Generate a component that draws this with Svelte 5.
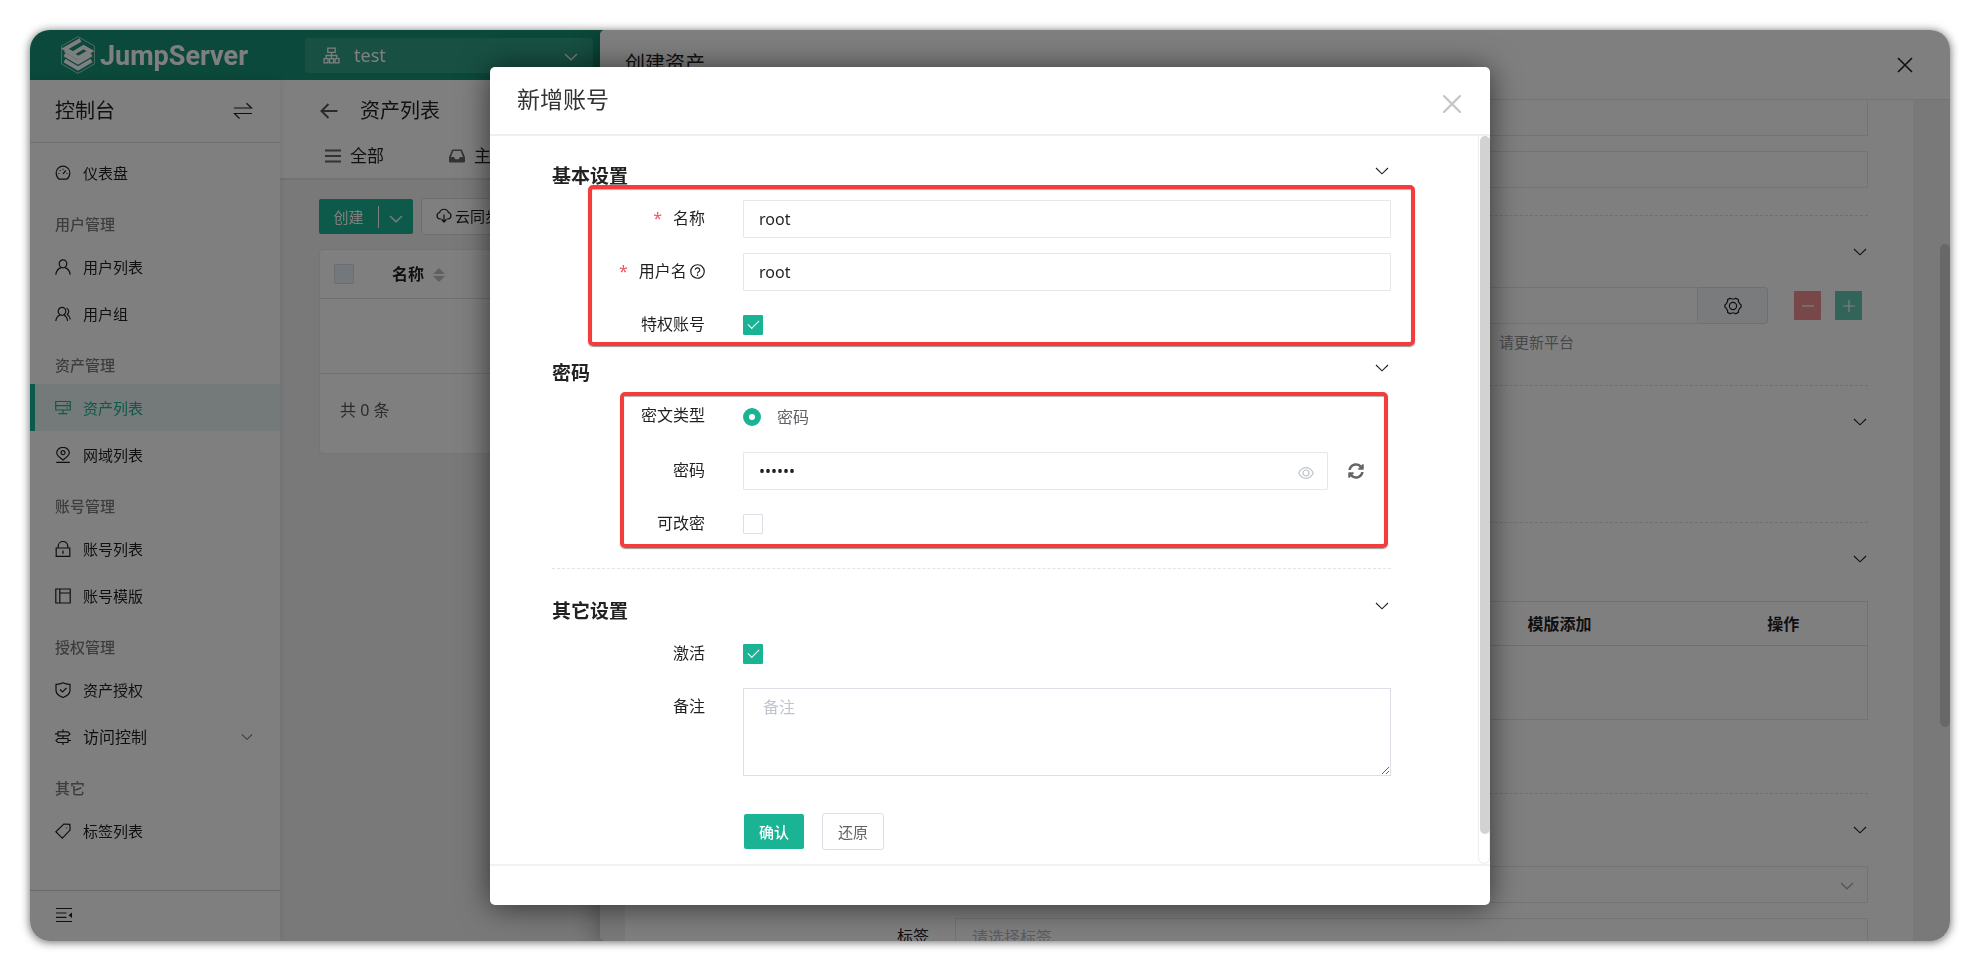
<script lang="ts">
	type MenuItem = {
		label: string;
		icon: string;
		active?: boolean;
		expandable?: boolean;
	};

	type MenuGroup = {
		title: string;
		items: MenuItem[];
	};

	// 侧边栏菜单
	const menu: MenuGroup[] = [
		{ title: '', items: [{ label: '仪表盘', icon: 'dashboard' }] },
		{
			title: '用户管理',
			items: [
				{ label: '用户列表', icon: 'user' },
				{ label: '用户组', icon: 'group' }
			]
		},
		{
			title: '资产管理',
			items: [
				{ label: '资产列表', icon: 'asset', active: true },
				{ label: '网域列表', icon: 'domain' }
			]
		},
		{
			title: '账号管理',
			items: [
				{ label: '账号列表', icon: 'lock' },
				{ label: '账号模版', icon: 'template' }
			]
		},
		{
			title: '授权管理',
			items: [
				{ label: '资产授权', icon: 'shield' },
				{ label: '访问控制', icon: 'acl', expandable: true }
			]
		},
		{ title: '其它', items: [{ label: '标签列表', icon: 'tag' }] }
	];

	// 16x16 线条图标
	const icons: Record<string, string> = {
		dashboard:
			'M4.2 14.2C2.5 13 1.2 10.8 1.2 8a6.8 6.8 0 0 1 13.6 0c0 2.800-1.300 5-3 6.200zM8 8.800l2.800-3.300M3.500 8.500h1M11.500 8.500h1M8 3.800v1M4.800 5.200l.7.7',
		user: 'M8 .8a3.800 4 0 1 1 0 8a3.800 4 0 1 1 0-8M.8 15.700c.4-3.600 2.600-6.200 5.200-7.100M15.200 15.700c-.4-3.600-2.600-6.200-5.200-7.100',
		group:
			'M7 1.300a3.800 4 0 1 1 0 8a3.800 4 0 1 1 0-8M.8 15c.3-2.800 1.900-5 4.200-6M12.600 15c-.2-2.600-1.500-4.800-3.400-6M11.500 2.300c2.600.8 3 4.300.8 6.200c1.600 1 2.700 2.800 3 5',
		asset: 'M.7 1.500h14.600v8.500H.7zM.7 5.700h14.600M8 10v3.500M3.500 13.600h9M11.500 3.700h1.500M11.500 8h1.500',
		domain:
			'M8 13c-3-2.300-6.300-4.500-6.300-7.300a6.300 5.300 0 0 1 12.600 0C14.300 8.500 11 10.700 8 13zM8 3.700a2 2 0 1 1 0 4a2 2 0 1 1 0-4M1.200 15.400h13.600',
		lock: 'M1.200 7h13.600v8.300H1.200zM3.200 7V5a4.800 4.500 0 0 1 9.600 0v2M8 9.500v3.200M7.300 11.500h1.400',
		template: 'M.8 1h14.400v14H.8zM4.800 1v14M4.800 5h10.400',
		shield:
			'M8 .8c2.400 1.200 4.700 1.600 7 1.500v6c0 3.700-3.500 6-7 7.200c-3.500-1.200-7-3.500-7-7.200v-6c2.300.1 4.600-.3 7-1.500zM5 7.500l2.500 2.500L11.500 6',
		acl: 'M8 .3v2.400M8 13.500v2.500M3 2.900h10l2 2L13 6.900H3zM8 6.900v2.600M13 9.500H3l-2 2L3 13.500h10zM0 4.900h3M13 11.500h3',
		tag: 'M8.800 1l6 .3l.3 5.800l-7.800 8L.8 8.700z M11.500 4.400v.9'
	};

	let accountName = $state('root');
	let username = $state('root');
	let password = $state('secret');
	let comment = $state('');
	let privileged = $state(true);
	let changeable = $state(false);
	let active = $state(true);
	let secretType = $state('password');

	function reset() {
		accountName = 'root';
		username = 'root';
		password = 'secret';
		comment = '';
	}
</script>

{#snippet chevron()}
	<svg class="chevron" viewBox="0 0 14 8" width="14" height="8" aria-hidden="true">
		<path d="M1 1l6 5.800L13 1" />
	</svg>
{/snippet}

{#snippet cross(size: number)}
	<svg class="cross" viewBox="0 0 16 16" width={size} height={size} aria-hidden="true">
		<path d="M1 1l14 14M15 1L1 15" />
	</svg>
{/snippet}

{#snippet sectionHead(title: string)}
	<div class="section-head">
		<h3>{title}</h3>
		<button type="button" class="fold" aria-label="折叠{title}">{@render chevron()}</button>
	</div>
{/snippet}

<div class="page">
	<div class="window">
		<header class="topbar">
			<a class="brand" href="#home">
				<svg viewBox="0 0 34 38" width="34" height="38" aria-hidden="true">
					<path class="hexagon" d="M17 .6L33.400 10v18L17 37.400L.6 28V10z" />
					<path class="mark-lines" d="M19.500 4L4 12.800L12 17.300L22.500 11L29.500 15L17.500 22L4 14.300" />
					<path class="mark-lines" d="M3.500 18.500L17 26.500L30.500 18.500M3.500 24.500L17 32.500L30.500 24.500" />
				</svg>
				<span>JumpServer</span>
			</a>
			<button type="button" class="org">
				<svg viewBox="0 0 16 16" width="17" height="17" aria-hidden="true">
					<path d="M4.500 1h7v4h-7zM8 5v6M3 11V8h10v3M1 11h3.700v4H1zM6.200 11h3.700v4H6.200zM11.400 11H15v4h-3.600z" />
				</svg>
				<span>test</span>
				{@render chevron()}
			</button>
		</header>

		<div class="workspace">
			<aside class="sidebar">
				<div class="view-title">
					<span>控制台</span>
					<svg viewBox="0 0 20 18" width="20" height="18" aria-hidden="true">
						<path d="M1 6h17.500L13.500 1.200M19 11.500H1.500L6.500 16.500" />
					</svg>
				</div>
				<nav>
					{#each menu as group}
						{#if group.title}
							<p class="group-title">{group.title}</p>
						{/if}
						{#each group.items as item}
							<a
								href="#{item.icon}"
								class="menu-item"
								class:active={item.active}
								class:expandable={item.expandable}
							>
								<svg viewBox="0 0 16 16" width="16" height="16" aria-hidden="true">
									<path d={icons[item.icon]} />
								</svg>
								<span>{item.label}</span>
								{#if item.expandable}{@render chevron()}{/if}
							</a>
						{/each}
					{/each}
				</nav>
				<button type="button" class="collapse" aria-label="收起菜单">
					<svg viewBox="0 0 16 16" width="16" height="16" aria-hidden="true">
						<path d="M0 1.500h16M0 6h10.500M0 10.300h10.500M0 14.500h16" />
						<path class="solid" d="M16 5.500v5.500L12.500 8.200z" />
					</svg>
				</button>
			</aside>

			<main class="content">
				<div class="page-head">
					<div class="heading">
						<svg viewBox="0 0 18 16" width="18" height="16" aria-hidden="true">
							<path d="M17.500 8H1.500M8.500 1L1.500 8l7 7" />
						</svg>
						<h1>资产列表</h1>
					</div>
					<div class="tabs">
						<a href="#all">
							<svg class="bars" viewBox="0 0 16 14" width="16" height="14" aria-hidden="true">
								<path d="M0 1.500h16M0 7h16M0 12.500h16" />
							</svg>
							全部
						</a>
						<a href="#host">
							<svg viewBox="0 0 16 14" width="16" height="14" aria-hidden="true">
								<path
									class="solid"
									fill-rule="evenodd"
									d="M3.200.5h9.600L16 8v4.500a1 1 0 0 1-1 1H1a1 1 0 0 1-1-1V8zM4.300 2L2 8h3l1.300 2.200h3.400L11 8h3l-2.300-6z"
								/>
							</svg>
							主机
						</a>
					</div>
				</div>

				<div class="toolbar">
					<div class="create">
						<button type="button">创建</button>
						<button type="button" aria-label="更多创建选项">{@render chevron()}</button>
					</div>
					<button type="button" class="sync">
						<svg viewBox="0 0 16 16" width="16" height="16" aria-hidden="true">
							<path d="M5.500 11H4a3.300 3.300 0 0 1-.4-6.500a4.600 4.600 0 0 1 8.800 0A3.300 3.300 0 0 1 12 11h-1.500M8 6.500v7M5.700 11.500L8 14l2.300-2.500" />
						</svg>
						云同步
					</button>
				</div>

				<div class="list-card">
					<table>
						<thead>
							<tr>
								<th class="tick"><input type="checkbox" aria-label="全选" /></th>
								<th>
									名称
									<svg class="sort" viewBox="0 0 12 14" width="12" height="14" aria-hidden="true">
										<path d="M6 0l6 6H0zM0 8h12l-6 6z" />
									</svg>
								</th>
							</tr>
						</thead>
						<tbody>
							<tr><td colspan="2"></td></tr>
						</tbody>
					</table>
					<p class="total">共 0 条</p>
				</div>
			</main>
		</div>

		<!-- 创建资产抽屉 -->
		<section class="drawer">
			<header>
				<h2>创建资产</h2>
				<button type="button" aria-label="关闭抽屉">{@render cross(16)}</button>
			</header>
			<div class="drawer-body">
				<div class="drawer-panel">
					<div class="drawer-row first"><input type="text" aria-label="名称" /></div>
					<div class="drawer-row"><input type="text" aria-label="地址" /></div>

					<div class="drawer-section protocol">
						<button type="button" class="fold" aria-label="折叠协议组">{@render chevron()}</button>
						<div class="protocol-row">
							<input type="text" aria-label="协议端口" />
							<button type="button" class="append" aria-label="协议设置">
								<svg viewBox="0 0 18 18" width="18" height="18" aria-hidden="true">
									<path d="M6.200 1.200l1.300.8h3l1.300-.8l2.600 1.500v1.600l1.400 2.600l1.300.9v2.400l-1.300.9l-1.400 2.600v1.600l-2.600 1.500l-1.300-.8h-3l-1.300.8l-2.600-1.500v-1.600l-1.400-2.600l-1.300-.9V7.800l1.300-.9l1.400-2.600V2.700z" />
									<circle cx="9" cy="9" r="3.600" />
								</svg>
							</button>
							<button type="button" class="square remove" aria-label="移除">
								<svg viewBox="0 0 12 12" width="12" height="12"><path d="M0 6h12" /></svg>
							</button>
							<button type="button" class="square add" aria-label="添加">
								<svg viewBox="0 0 12 12" width="12" height="12"><path d="M0 6h12M6 0v12" /></svg>
							</button>
						</div>
						<p class="hint">请更新平台</p>
					</div>

					<div class="drawer-section nodes">
						<button type="button" class="fold" aria-label="折叠节点">{@render chevron()}</button>
					</div>

					<div class="drawer-section accounts">
						<button type="button" class="fold" aria-label="折叠账号">{@render chevron()}</button>
						<table>
							<thead>
								<tr><th></th><th>模版添加</th><th>操作</th></tr>
							</thead>
							<tbody>
								<tr><td colspan="3"></td></tr>
							</tbody>
						</table>
					</div>

					<div class="drawer-section others">
						<button type="button" class="fold" aria-label="折叠其它">{@render chevron()}</button>
						<div class="drawer-row select-row">
							<select aria-label="网域"><option></option></select>
							{@render chevron()}
						</div>
						<div class="drawer-row">
							<label for="labels">标签</label>
							<input id="labels" type="text" placeholder="请选择标签" />
						</div>
					</div>
				</div>
			</div>
			<span class="drawer-thumb"></span>
		</section>

		<div class="overlay"></div>

		<!-- 新增账号弹窗 -->
		<div class="dialog" role="dialog" aria-labelledby="dialog-title">
			<header>
				<h2 id="dialog-title">新增账号</h2>
				<button type="button" aria-label="关闭">{@render cross(18)}</button>
			</header>

			<div class="dialog-scroll">
				<form onsubmit={(e) => e.preventDefault()}>
					<section class="basic">
						{@render sectionHead('基本设置')}
						<div class="row">
							<label for="name"><i>*</i>名称</label>
							<input id="name" type="text" bind:value={accountName} />
						</div>
						<div class="row">
							<label for="username">
								<i>*</i>用户名
								<svg viewBox="0 0 16 16" width="15" height="15" aria-hidden="true">
									<circle cx="8" cy="8" r="7.200" />
									<path d="M5.600 6.200a2.400 2.200 0 1 1 3.600 2C8.300 8.700 8 9 8 10M8 11.300v1.500" />
								</svg>
							</label>
							<input id="username" type="text" bind:value={username} />
						</div>
						<div class="row">
							<label for="privileged">特权账号</label>
							<input id="privileged" type="checkbox" bind:checked={privileged} />
						</div>
						<span class="highlight"></span>
					</section>

					<section class="secret">
						{@render sectionHead('密码')}
						<div class="row">
							<span class="label" id="secret-type">密文类型</span>
							<label class="radio">
								<input type="radio" name="secret-type" value="password" bind:group={secretType} />
								密码
							</label>
						</div>
						<div class="row">
							<label for="password">密码</label>
							<div class="password">
								<div class="field">
									<input id="password" type="password" bind:value={password} />
									<button type="button" aria-label="显示密码">
										<svg viewBox="0 0 16 12" width="16" height="12">
											<path d="M.7 6C2.500 2.500 5 .7 8 .7S13.500 2.500 15.300 6C13.500 9.500 11 11.300 8 11.300S2.500 9.500.7 6z" />
											<circle cx="8" cy="6" r="3" />
										</svg>
									</button>
								</div>
								<button type="button" class="refresh" aria-label="随机生成">
									<svg viewBox="0 0 512 512" width="16" height="16">
										<path d="M370.700 133.300C339.500 104 298.900 88 255.800 88c-77.500.1-144.300 53.200-162.800 126.900-1.300 5.400-6.100 9.200-11.700 9.200H24.100c-7.500 0-13.200-6.800-11.800-14.200C33.900 94.900 134.800 8 256 8c66.400 0 126.800 26.100 171.300 68.700L463 41C478.100 25.900 504 36.600 504 57.900V192c0 13.300-10.700 24-24 24H345.900c-21.400 0-32.100-25.900-17-41l41.800-41.700zM32 296h134.100c21.400 0 32.100 25.900 17 41l-41.800 41.800c31.300 29.300 71.800 45.300 114.900 45.300 77.400-.1 144.300-53.100 162.800-126.800 1.300-5.400 6.100-9.200 11.700-9.200h57.300c7.500 0 13.200 6.800 11.800 14.200C478.100 417.100 377.200 504 256 504c-66.400 0-126.800-26.100-171.300-68.700L49 471c-15.100 15.100-41 4.400-41-16.900V320c0-13.300 10.700-24 24-24z" />
									</svg>
								</button>
							</div>
						</div>
						<div class="row">
							<label for="changeable">可改密</label>
							<input id="changeable" type="checkbox" bind:checked={changeable} />
						</div>
						<span class="highlight"></span>
					</section>

					<section class="other">
						{@render sectionHead('其它设置')}
						<div class="row">
							<label for="active">激活</label>
							<input id="active" type="checkbox" bind:checked={active} />
						</div>
						<div class="row">
							<label for="comment">备注</label>
							<textarea id="comment" placeholder="备注" bind:value={comment}></textarea>
						</div>
						<div class="actions">
							<button type="submit" class="primary">确认</button>
							<button type="button" onclick={reset}>还原</button>
						</div>
					</section>
				</form>
				<div class="track"><span class="thumb"></span></div>
			</div>

			<footer></footer>
		</div>
	</div>
</div>

<style>
	:global(body) {
		margin: 0;
		background: #fff;
	}

	.page {
		--primary: #1ab394;
		--line: #e7e7ea;
		box-sizing: border-box;
		height: 100vh;
		padding: 30px 30px 20px;
		color: #1f2022;
		font: 16px/24px 'Noto Sans', 'Noto Sans CJK SC', sans-serif;
		filter: drop-shadow(0 1px 5px rgba(0, 0, 0, 0.6));
	}

	.page :global(*),
	.page :global(*::before),
	.page :global(*::after) {
		box-sizing: border-box;
	}

	h1,
	h2,
	h3,
	p {
		margin: 0;
		font-weight: 400;
	}

	button,
	input,
	select,
	textarea {
		margin: 0;
		color: inherit;
		font: inherit;
	}

	button {
		padding: 0;
		border: 0;
		background: none;
	}

	a {
		color: inherit;
		text-decoration: none;
	}

	svg {
		flex: none;
		fill: none;
		stroke: currentColor;
		stroke-width: 1.2;
	}

	.solid {
		fill: currentColor;
		stroke: none;
	}

	.window {
		position: relative;
		display: flex;
		flex-direction: column;
		height: calc(100vh - 50px);
		overflow: hidden;
		border-radius: 20px;
		background: #f3f3f4;
	}

	/* 顶部导航 */
	.topbar {
		display: flex;
		align-items: center;
		flex: none;
		height: 50px;
		padding-left: 31px;
		color: #fff;
		background: #159276;
	}

	.brand {
		display: flex;
		align-items: center;
		gap: 5px;
		width: 244px;
		font: 700 27px/38px Roboto, sans-serif;
	}

	.brand span {
		padding-top: 2px;
	}

	.hexagon {
		stroke-width: 1;
		opacity: 0.6;
	}

	.mark-lines {
		stroke-width: 3.8;
	}

	.org {
		display: flex;
		align-items: center;
		gap: 14px;
		width: 288px;
		height: 35px;
		padding: 0 15px 0 18px;
		border-radius: 3px;
		background: #30a187;
		font-size: 18px;
	}

	.org .chevron {
		margin: 3px 0 0 auto;
	}

	.workspace {
		display: flex;
		flex: 1;
		min-height: 0;
	}

	/* 侧边栏 */
	.sidebar {
		z-index: 1;
		display: flex;
		flex-direction: column;
		flex: none;
		width: 250px;
		background: #fff;
		box-shadow: 0 0 8px rgba(0, 0, 0, 0.1);
	}

	.view-title {
		display: flex;
		align-items: center;
		justify-content: space-between;
		height: 63px;
		padding: 0 27px 1px 25px;
		border-bottom: 1px solid #e0e0e0;
		font-size: 20px;
	}

	nav {
		flex: 1;
		padding-top: 6px;
	}

	.group-title {
		height: 47px;
		padding: 10px 25px 0;
		color: #7b7b7b;
		font-size: 15px;
		font-weight: 500;
		line-height: 37px;
	}

	.menu-item {
		display: flex;
		align-items: center;
		gap: 12px;
		height: 47px;
		padding: 0 25px;
		font-size: 15px;
	}

	.menu-item.active {
		padding-left: 20px;
		border-left: 5px solid var(--primary);
		color: var(--primary);
		background: #e8f4f3;
	}

	.menu-item.expandable {
		padding-right: 27px;
		font-size: 16px;
	}

	.menu-item .chevron {
		width: 12px;
		margin-left: auto;
		color: #777;
	}

	.collapse {
		display: flex;
		align-items: center;
		height: 51px;
		padding: 0 26px 2px;
		border-top: 1px solid #d4d4d4;
	}

	/* 资产列表页 */
	.content {
		flex: 1;
		min-width: 0;
	}

	.page-head {
		height: 100px;
		padding: 0 40px;
		border-bottom: 2px solid #e3e4ea;
		background: #fff;
	}

	.heading {
		display: flex;
		align-items: center;
		gap: 22px;
		height: 60px;
		padding-top: 2px;
	}

	.heading svg,
	.bars {
		stroke-width: 2;
		color: #555;
	}

	h1 {
		font-size: 20px;
	}

	.tabs {
		display: flex;
		gap: 65px;
		padding: 4px 5px;
		font-size: 17px;
	}

	.tabs a {
		display: flex;
		align-items: center;
		gap: 9px;
	}

	.tabs svg {
		color: #666;
	}

	.toolbar {
		display: flex;
		align-items: center;
		gap: 8px;
		padding: 18px 39px 14px;
		font-size: 15px;
	}

	.create {
		display: flex;
		align-items: center;
		width: 94px;
		height: 35px;
		border-radius: 2px;
		color: #fff;
		background: var(--primary);
	}

	.create button {
		width: 34px;
		line-height: 22px;
	}

	.create button:first-child {
		width: 60px;
		border-right: 1px solid #fff;
	}

	.sync {
		display: flex;
		align-items: center;
		gap: 3px;
		height: 37px;
		padding: 0 14px 1px;
		border: 1px solid #dcdcdf;
		border-radius: 3px;
		background: #fff;
	}

	.list-card {
		margin: 0 39px;
		border: 1px solid #e8e8ec;
		border-radius: 4px;
		background: #fff;
	}

	table {
		width: 100%;
		border-collapse: collapse;
	}

	.list-card th {
		height: 48px;
		padding: 0;
		border-bottom: 1px solid #dfdfe2;
		font-weight: 700;
		text-align: left;
	}

	.list-card .tick {
		width: 72px;
		padding-left: 14px;
	}

	.list-card .tick input {
		display: block;
		border-color: #d6dbe6;
		background: #e9eff8;
	}

	.list-card td {
		height: 75px;
		padding: 0;
		border-bottom: 1px solid #e3e3e6;
	}

	.sort {
		margin-left: 5px;
		vertical-align: -2px;
		fill: #bfc1c6;
		stroke: none;
	}

	.total {
		height: 79px;
		padding-left: 20px;
		color: #55575c;
		line-height: 73px;
	}

	/* 抽屉 */
	.drawer {
		position: absolute;
		top: 0;
		right: 0;
		bottom: 0;
		left: 570px;
		z-index: 2;
		display: flex;
		flex-direction: column;
		overflow: hidden;
		border-radius: 5px 0 0 5px;
		background: #f3f3f4;
		box-shadow: 0 8px 30px rgba(0, 0, 0, 0.35);
	}

	.drawer header {
		display: flex;
		justify-content: space-between;
		flex: none;
		height: 70px;
		padding: 20px 37px 0 25px;
		border-bottom: 1px solid #e6e6e8;
		background: #fff;
	}

	.drawer h2 {
		font-size: 20px;
		line-height: 28px;
	}

	.drawer header button {
		align-self: flex-start;
		padding-top: 7px;
		line-height: 0;
	}

	.drawer .cross {
		stroke-width: 1.6;
	}

	.drawer-body {
		flex: 1;
		min-height: 0;
		overflow: hidden;
		padding: 0 37px 0 25px;
	}

	.drawer-panel {
		height: 100%;
		padding: 0 45px 0 24px;
		background: #fff;
	}

	.drawer input,
	.drawer select {
		width: 100%;
		height: 37px;
		padding: 0 16px;
		border: 1px solid var(--line);
		border-radius: 1px;
		background: #fff;
		appearance: none;
	}

	.drawer input::placeholder {
		color: #b6b9c2;
		opacity: 1;
	}

	.drawer-row {
		position: relative;
		display: flex;
		padding-left: 306px;
		margin-bottom: 15px;
	}

	.drawer-row.first input {
		height: 36px;
		border-top: 0;
	}

	.drawer-row label {
		flex: none;
		width: 58px;
		margin-left: -58px;
		line-height: 37px;
	}

	.drawer-section {
		display: flex;
		flex-direction: column;
		padding-top: 25px;
		border-top: 1px dashed #dedee2;
	}

	.protocol {
		height: 170px;
		margin-top: 27px;
	}

	.nodes {
		height: 137px;
	}

	.accounts {
		height: 271px;
	}

	.fold {
		align-self: flex-end;
		height: 22px;
		padding-right: 1px;
		line-height: 0;
	}

	.fold .chevron {
		display: block;
		stroke-width: 1.1;
	}

	.drawer .fold {
		padding-bottom: 1px;
	}

	.protocol-row {
		display: flex;
		align-items: center;
		margin-top: 24px;
		padding-left: 306px;
	}

	.append {
		display: flex;
		align-items: center;
		justify-content: center;
		flex: none;
		width: 70px;
		height: 37px;
		margin-right: 26px;
		border: 1px solid #dcdfe6;
		border-left: 0;
		border-radius: 0 4px 4px 0;
		background: #f3f6fb;
	}

	.square {
		display: flex;
		align-items: center;
		justify-content: center;
		flex: none;
		width: 27px;
		height: 29px;
		margin-right: 14px;
		border-radius: 1px;
		color: #fff;
		background: #f08f95;
	}

	.square.add {
		margin-right: 6px;
		background: #66c9b3;
	}

	.hint {
		align-self: flex-end;
		width: 369px;
		padding-top: 6px;
		color: #8f9196;
		font-size: 15px;
	}

	.accounts table {
		margin-top: 31px;
		border: 1px solid #e4e4e8;
		table-layout: fixed;
	}

	.accounts th {
		width: 280px;
		height: 44px;
		padding: 0;
		border-bottom: 1px solid #e0e0e4;
		font-weight: 700;
		text-align: center;
	}

	.accounts th:first-child {
		width: auto;
	}

	.accounts th:last-child {
		width: 168px;
	}

	.accounts td {
		height: 74px;
	}

	.select-row {
		margin-top: 25px;
	}

	.select-row .chevron {
		position: absolute;
		top: 16px;
		right: 14px;
		color: #a5a8b0;
	}

	.drawer-thumb {
		position: absolute;
		top: 214px;
		right: 0;
		width: 10px;
		height: 53%;
		border-radius: 5px;
		background: #d0d0d0;
	}

	.overlay {
		position: absolute;
		inset: 0;
		z-index: 3;
		background: rgba(0, 0, 0, 0.5);
	}

	/* 弹窗 */
	.dialog {
		position: absolute;
		top: 37px;
		left: calc(25% - 20px);
		z-index: 4;
		width: calc(50% + 40px);
		border-radius: 5px;
		background: #fff;
		box-shadow: 0 2px 30px rgba(0, 0, 0, 0.6);
	}

	.dialog header {
		display: flex;
		justify-content: space-between;
		align-items: center;
		height: 69px;
		padding: 0 29px 4px 27px;
		border-bottom: 2px solid #ecf0f4;
	}

	.dialog h2 {
		color: #333;
		font-size: 23px;
	}

	.dialog header button {
		padding-top: 10px;
		color: #c8c8c8;
		line-height: 0;
	}

	.dialog .cross {
		stroke-width: 2;
		stroke-linecap: round;
	}

	.dialog-scroll {
		position: relative;
		height: calc(100vh - 233px);
		overflow: hidden;
	}

	.dialog footer {
		height: 41px;
		border-top: 2px solid #f1f2f3;
	}

	form {
		padding: 16px 99px 0 62px;
	}

	form section {
		position: relative;
	}

	.section-head {
		display: flex;
		align-items: center;
		justify-content: space-between;
		height: 48px;
		padding-right: 1px;
	}

	.section-head .fold {
		align-self: flex-start;
		padding-top: 15px;
	}

	h3 {
		color: #222;
		font-size: 19px;
		font-weight: 700;
	}

	.row {
		display: grid;
		grid-template-columns: 153px 1fr;
		column-gap: 38px;
		margin-bottom: 15px;
		min-height: 38px;
		align-items: center;
	}

	.row > label,
	.row > .label {
		align-self: start;
		text-align: right;
		line-height: 37px;
		white-space: nowrap;
	}

	.row i {
		margin-right: 11px;
		color: #ed5565;
		font-style: normal;
	}

	.row label svg {
		margin-left: -1px;
		vertical-align: -2px;
		stroke-width: 1.3;
	}

	.row input[type='text'],
	.row input[type='password'] {
		width: 100%;
		height: 38px;
		padding: 0 15px;
		border: 1px solid var(--line);
		border-radius: 1px;
		background: #fff;
	}

	input[type='checkbox'] {
		position: relative;
		width: 20px;
		height: 20px;
		border: 1px solid #dcdfe6;
		border-radius: 1px;
		background: #fff;
		appearance: none;
	}

	input[type='checkbox']:checked {
		border-color: var(--primary);
		background: var(--primary);
	}

	input[type='checkbox']:checked::after {
		content: '';
		position: absolute;
		top: 4px;
		left: 4px;
		width: 11px;
		height: 6px;
		border: solid #fff;
		border-width: 0 0 1px 1px;
		transform: rotate(-45deg);
	}

	.row > .radio {
		display: flex;
		align-items: center;
		gap: 16px;
		color: #606266;
		line-height: 40px;
	}

	input[type='radio'] {
		width: 18px;
		height: 18px;
		border: 6px solid var(--primary);
		border-radius: 50%;
		background: #fff;
		appearance: none;
	}

	.password {
		display: flex;
		align-items: center;
		gap: 20px;
		padding-right: 27px;
	}

	.field {
		position: relative;
		flex: 1;
	}

	.field button {
		position: absolute;
		top: 15px;
		right: 14px;
		color: #c0c4cc;
		line-height: 0;
	}

	.refresh {
		color: #666;
		line-height: 0;
	}

	.refresh svg {
		fill: currentColor;
		stroke: none;
	}

	textarea {
		display: block;
		width: 100%;
		height: 88px;
		padding: 6px 19px;
		border: 1px solid #dcdfe6;
		resize: vertical;
	}

	textarea::placeholder {
		color: #c0c4cc;
		opacity: 1;
	}

	.secret {
		margin-top: 5px;
	}

	.row:nth-last-child(2) {
		margin-bottom: 0;
	}

	.other {
		margin-top: 25px;
		padding-top: 18px;
		border-top: 1px dashed #e2e3e6;
	}

	.actions {
		display: flex;
		gap: 17px;
		padding: 37px 0 15px 191px;
	}

	.actions button {
		width: 62px;
		height: 37px;
		border: 1px solid #dcdfe6;
		border-radius: 3px;
		color: #606266;
		background: #fff;
		font-size: 15px;
		line-height: 22px;
	}

	.actions .primary {
		border-color: #fff;
		color: #fff;
		background: var(--primary);
		font-weight: 500;
	}

	/* 重点标注框 */
	.highlight {
		position: absolute;
		top: 33px;
		right: -24px;
		bottom: -2px;
		left: 36px;
		border: 4px solid #f43c3c;
		border-radius: 5px;
		box-shadow: 0 1px 1px rgba(0, 0, 0, 0.4), inset 0 1px 1px rgba(0, 0, 0, 0.3);
		pointer-events: none;
	}

	.secret .highlight {
		top: 43px;
		right: 3px;
		bottom: -5px;
		left: 68px;
	}

	.track {
		position: absolute;
		top: 0;
		right: 0;
		bottom: 0;
		width: 12px;
		border: 1px solid #ededed;
		border-width: 0 1px 1px;
		border-radius: 0 0 6px 6px;
	}

	.thumb {
		position: absolute;
		top: 0;
		right: -1px;
		width: 10px;
		height: 96%;
		border-radius: 5px;
		background: #d2d2d2;
	}
</style>
